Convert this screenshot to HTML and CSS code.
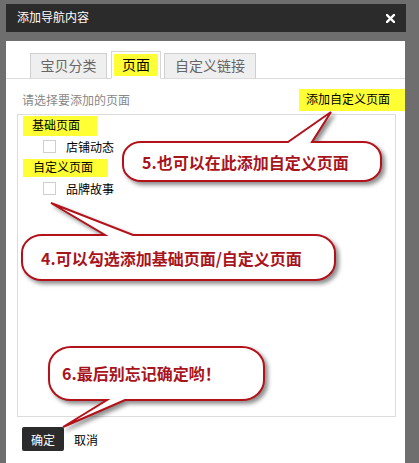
FILE: index.html
```html
<!DOCTYPE html>
<html lang="zh">
<head>
<meta charset="utf-8">
<title>添加导航内容</title>
<link rel="stylesheet" href="styles.css">
</head>
<body>
<div class="page">
  <div class="dialog">
    <div class="dlg-head">
      <span class="dlg-title">添加导航内容</span>
      <svg class="dlg-close" width="9" height="9" viewBox="0 0 9 9"><path d="M1 1 L8 8 M8 1 L1 8" stroke="#fff" stroke-width="2.4" stroke-linecap="square"/></svg>
    </div>
    <div class="dlg-gap"></div>
    <div class="dlg-body">
      <div class="tabs">
        <div class="tab t1">宝贝分类</div>
        <div class="tab active"><span class="hl">页面</span></div>
        <div class="tab t3">自定义链接</div>
      </div>
      <div class="toolbar">
        <span class="hint">请选择要添加的页面</span>
        <span class="add-link">添加自定义页面</span>
      </div>
      <div class="list">
        <div class="group"><span class="group-label g1">基础页面</span></div>
        <label class="item"><span class="check"></span><span>店铺动态</span></label>
        <div class="group"><span class="group-label g2">自定义页面</span></div>
        <label class="item"><span class="check"></span><span>品牌故事</span></label>
      </div>
      <div class="actions">
        <button class="btn-ok">确定</button>
        <button class="btn-cancel">取消</button>
      </div>
    </div>
  </div>

  <svg class="callouts" width="419" height="463" viewBox="0 0 419 463">
    <path d="M141 142 L288 142 L331 112 L312 142 L363 142 A18 16 0 0 1 381 158 L381 165 A18 16 0 0 1 363 181 L141 181 A18 16 0 0 1 123 165 L123 158 A18 16 0 0 1 141 142 Z"/>
    <path d="M42 235 L105 235 L51 203 L133 235 L315 235 A20 18 0 0 1 335 253 L335 262 A20 18 0 0 1 315 280 L42 280 A20 18 0 0 1 22 262 L22 253 A20 18 0 0 1 42 235 Z"/>
    <path d="M71 347 L242 347 A22 20 0 0 1 264 367 L264 380 A22 20 0 0 1 242 400 L125 400 L63 427 L107 400 L71 400 A22 20 0 0 1 49 380 L49 367 A22 20 0 0 1 71 347 Z"/>
  </svg>
  <div class="note n5">5.也可以在此添加自定义页面</div>
  <div class="note n4">4.可以勾选添加基础页面/自定义页面</div>
  <div class="note n6">6.最后别忘记确定哟！</div>
</div>
</body>
</html>
```
FILE: styles.css
```css
* { box-sizing: border-box; }
html, body { margin: 0; padding: 0; }
body {
  background: #6e6e6e;
  font-family: "Liberation Sans", "Noto Sans CJK SC", sans-serif;
  font-size: 12px;
  color: #000;
}
.page {
  position: relative;
  width: 419px;
  height: 463px;
  overflow: hidden;
}
.dialog {
  margin-left: 6px;
  padding-top: 4px;
  width: 400px;
}
.dlg-head {
  height: 28px;
  background: #2b2b2b;
  display: flex;
  align-items: center;
  justify-content: space-between;
  padding: 0 11px 1px 11px;
  color: #fff;
}
.dlg-title { font-size: 12px; line-height: 14px; }
.dlg-close { display: block; margin-top: 1px; }
.dlg-gap { height: 9px; }
.dlg-body {
  width: 399px;
  height: 422px;
  background: #fff;
}
.tabs {
  display: flex;
  align-items: flex-end;
  height: 38px;
  padding-left: 24px;
  border-bottom: 1px solid #dcdcdc;
}
.tab {
  height: 26px;
  margin-bottom: -1px;
  padding: 0;
  background: #efefef;
  border: 1px solid #cfcfcf;
  border-bottom-color: #dcdcdc;
  color: #666;
  font-size: 14px;
  line-height: 24px;
  text-align: center;
  white-space: nowrap;
  margin-right: 4px;
}
.t1 { width: 77px; }
.t3 { width: 92px; }
.tab.active {
  height: 28px;
  width: 50px;
  padding: 2px 2px 1px;
  background: #fff;
  border-color: #d6d6d6;
  border-bottom-color: #fff;
  margin-right: 3px;
}
.tab .hl {
  display: block;
  height: 22px;
  background: #ffff33;
  color: #000;
  text-align: center;
  line-height: 22px;
}
.toolbar {
  display: flex;
  justify-content: space-between;
  align-items: center;
  height: 35px;
  padding: 9px 0 3px 16px;
}
.hint { color: #888; font-size: 12px; }
.add-link {
  background: #ffff33;
  height: 22px;
  line-height: 22px;
  width: 106px;
  padding-left: 7px;
  font-size: 12px;
  color: #000;
}
.list {
  margin-left: 11px;
  width: 379px;
  height: 303px;
  border: 1px solid #dcdcdc;
  padding-left: 5px;
}
.group { height: 21px; display: flex; align-items: center; }
.group-label {
  background: #ffff33;
  height: 20px;
  line-height: 20px;
}
.g1 { width: 74px; padding-left: 9px; }
.g2 { width: 85px; padding-left: 10px; height: 18px; line-height: 18px; }
.item {
  display: flex;
  align-items: center;
  height: 21px;
  padding-left: 20px;
}
.check {
  width: 13px;
  height: 13px;
  border: 1px solid #cfcfcf;
  background: #fff;
  margin-right: 10px;
}
.actions {
  display: flex;
  align-items: center;
  padding: 10px 0 0 16px;
}
.btn-ok {
  width: 42px;
  height: 24px;
  background: #2b2b2b;
  color: #fff;
  border: 0;
  border-radius: 2px;
  font: 12px "Liberation Sans", "Noto Sans CJK SC", sans-serif;
  padding: 0;
  margin-right: 10px;
}
.btn-cancel {
  background: none;
  border: 0;
  padding: 0;
  font: 12px "Liberation Sans", "Noto Sans CJK SC", sans-serif;
  color: #000;
}
.callouts {
  position: absolute;
  left: 0;
  top: 0;
  pointer-events: none;
  filter: drop-shadow(3px 3px 2px rgba(0, 0, 0, 0.45));
}
.callouts path {
  fill: #fff;
  stroke: #b3121a;
  stroke-width: 2;
  stroke-linejoin: miter;
}
.note {
  position: absolute;
  font-family: "Noto Sans CJK SC", sans-serif;
  font-weight: bold;
  font-size: 16px;
  line-height: 20px;
  color: #a8141c;
  white-space: nowrap;
}
.n5 { left: 142px; top: 152px; }
.n4 { left: 41px; top: 248px; }
.n6 { left: 62px; top: 363px; }
```
